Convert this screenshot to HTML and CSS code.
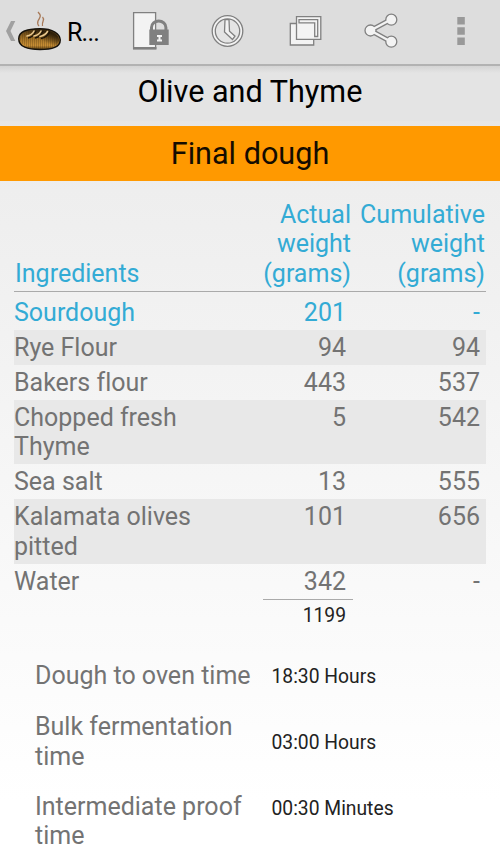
FILE: index.html
```html
<!DOCTYPE html>
<html lang="en">
<head>
<meta charset="utf-8">
<title>Olive and Thyme</title>
<link rel="stylesheet" href="styles.css">
</head>
<body>
<header class="bar">
  <svg class="back" viewBox="0 0 18 66"><path d="M15.300 21h-4.300L6 31l5 10h4.300L10.500 31z" fill="#a0a0a0"/></svg>
  <svg class="loaf" viewBox="0 0 44 66">
    <defs>
      <linearGradient id="crust" x1="0" y1="0" x2="0" y2="1"><stop offset="0" stop-color="#4a3310"/><stop offset=".5" stop-color="#a87628"/><stop offset=".8" stop-color="#c98f35"/><stop offset="1" stop-color="#5a3e12"/></linearGradient>
      <linearGradient id="shade" x1="0" y1="1" x2="1" y2="0"><stop offset=".5" stop-color="#1c1305" stop-opacity="0"/><stop offset=".8" stop-color="#1c1305" stop-opacity=".8"/></linearGradient>
      <pattern id="grain" width="2" height="2" patternUnits="userSpaceOnUse"><path d="M.5 0v2" stroke="#3b2608" stroke-width=".5" opacity=".5"/></pattern>
    </defs>
    <path d="M.8 38.500C1 31 9 28.800 22 28.800s20 5 20.200 11C42.500 47 34 49.500 22 49.500S.5 47 .8 38.500z" fill="url(#crust)" stroke="#15110b" stroke-width="1.500"/>
    <path d="M2 38.500C3 32 10 30 22 30s19 4 19 10c0 6-8 9-19 9S2 45 2 38.500z" fill="url(#shade)"/>
    <path d="M2 38.500C3 32 10 30 22 30s19 4 19 10c0 6-8 9-19 9S2 45 2 38.500z" fill="url(#grain)"/>
    <g fill="none" stroke="#1d1407" stroke-width="1.300"><path d="M10 38q6-1 8-7M17 38q6-1 8-7M23 38.500q6-1 9-7"/></g>
    <g fill="none" stroke="#e9c88f" stroke-width="1.600" stroke-linecap="round"><path d="M9 36q5-1 7-5M16 36q5-1 7-5M22 36.500q5-1 7.500-5"/></g>
    <g fill="none" stroke="#a87958" stroke-width="1.300"><path d="M20 12c4 4 2 5 0 9q-1 3 1 5"/><path d="M24.500 17c3 3-1 4 0 9"/></g>
  </svg>
  <span class="app">R...</span>
  <svg class="actions" viewBox="125 0 375 66" fill="#f3f3f3" stroke="#808080" stroke-width="1.300">
    <path d="M133.600 12.700h22v36h-22z"/><path d="M133 47h23.500v2.500H133z" fill="#808080" stroke="none"/>
    <path d="M151.500 31v-3.500a7.200 6.500 0 0 1 14.400 0V31" fill="none" stroke-width="3"/><path d="M149.300 29.500h19.400v15.500h-19.400z" fill="#808080" stroke="none"/><path d="M157 35h5v2h-1.500v2.500h1.500v2h-5v-2h1.500V37H157z" stroke="none"/>
    <circle cx="227.500" cy="31" r="15.300"/><circle cx="227.500" cy="31" r="12.200" fill="#e4e4e4"/><path d="M225 19.700h4l.5 11.500 5.500 5-2.500 3.300-8-7.500z"/>
    <path d="M290.300 23.500h23.400V45h-23.400z"/><path d="M296.500 16.600h24.300v22.700h-24.300z"/><path d="M299 19.700h18.700v16.800h-3V22.800H299z"/>
    <path d="M370.500 30.500 391 19.500M370.500 30.500 391 41.700" stroke-width="5"/><circle cx="370.500" cy="30.500" r="5.500"/><circle cx="391.300" cy="19.700" r="5.500"/><circle cx="391.300" cy="41.700" r="5.500"/>
    <path d="M370.500 30.500 391 19.500M370.500 30.500 391 41.700" stroke="#f3f3f3" stroke-width="2.400"/>
    <g fill="#999" stroke="none"><path d="M457.300 17h7.500v7.500h-7.500zM457.300 27.300h7.500v7.500h-7.500zM457.300 37.500h7.500V45h-7.500z"/></g>
  </svg>
</header>
<h1 class="title">Olive and Thyme</h1>
<h2 class="stage">Final dough</h2>
<main>
  <section class="table">
    <div class="row head"><span>Ingredients</span><span>Actual weight (grams)</span><span>Cumulative weight (grams)</span></div>
    <div class="row link"><span>Sourdough</span><span>201</span><span>-</span></div>
    <div class="row alt"><span>Rye Flour</span><span>94</span><span>94</span></div>
    <div class="row"><span>Bakers flour</span><span>443</span><span>537</span></div>
    <div class="row alt"><span>Chopped fresh Thyme</span><span>5</span><span>542</span></div>
    <div class="row"><span>Sea salt</span><span>13</span><span>555</span></div>
    <div class="row alt"><span>Kalamata olives pitted</span><span>101</span><span>656</span></div>
    <div class="row"><span>Water</span><span>342</span><span>-</span></div>
    <div class="total">1199</div>
  </section>
  <section class="times">
    <div class="time"><span>Dough to oven time</span><b>18:30 Hours</b></div>
    <div class="time"><span>Bulk fermentation time</span><b>03:00 Hours</b></div>
    <div class="time last"><span>Intermediate proof time</span><b>00:30 Minutes</b></div>
  </section>
</main>
</body>
</html>
```
FILE: styles.css
```css
* { box-sizing: border-box; }
body { margin: 0; height: 852px; overflow: hidden; font: 25px/29.3px Roboto, sans-serif; font-variant-ligatures: none; color: #737373; background: linear-gradient(#e0e0e0 66px, #eee 190px, #fff 800px); }
.bar { height: 66px; display: flex; background: #ddd; border-bottom: 2px solid #b2b2b2; }
.bar svg { height: 66px; flex: none; }
.back { width: 18px; }
.loaf { width: 44px; }
.app { width: 63px; padding: 18px 0 0 5px; letter-spacing: -.8px; color: #000; }
.actions { width: 375px; }
.title, .stage { margin: 0; font-size: 30.6px; font-weight: 400; text-align: center; color: #000; }
.title { height: 55px; line-height: 51px; background: linear-gradient(#d4d4d4, #e4e4e4 7px); }
.stage { height: 55px; margin-top: 5px; line-height: 55px; background: #f90; color: #140c00; }
.table { width: 472px; margin: 18px 0 0 14px; }
.row { display: grid; grid-template-columns: 240px 92px 134px; min-height: 35.1px; padding: 3px 0 2.8px; }
.row span:nth-child(n+2) { text-align: right; }
.row.head { grid-template-columns: 240px 97px 134px; align-items: end; height: 93px; margin-bottom: 2.5px; padding: 0 0 3px; border-bottom: 1.500px solid #aaa; }
.head span:first-child { padding-left: 1px; }
.row:not(.head) span:first-child { padding-right: 60px; }
.head, .link { color: #33abd5; }
.alt { background: #e8e8e8; }
.total { width: 90px; margin-left: 249px; padding: 3px 7px 0 0; border-top: 1px solid #aaa; font-size: 19.3px; line-height: 26px; text-align: right; color: #222; }
.times { display: grid; gap: 21px; margin: 31.4px 0 0 35px; }
.time { display: grid; grid-template-columns: 236.500px 1fr; align-items: center; }
.time span { width: 218px; }
.time b { padding-top: 2px; font-size: 19.3px; font-weight: 400; color: #222; }
.last { align-items: start; }
```
